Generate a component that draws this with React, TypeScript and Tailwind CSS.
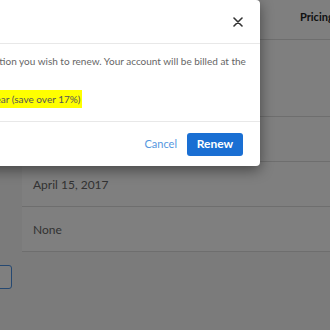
import React from "react";

export default function App() {
  return (
    <div className="relative w-[330px] h-[330px] overflow-hidden bg-[#f6f6f6] font-['Lato',sans-serif]">
      {/* underlying page */}
      <div className="flex flex-col">
        <div className="ml-[22px] w-[400px] bg-white text-[12px] text-[#666]">
          <div className="h-[40px] border-b border-[#dcdcdc] flex items-start pt-[9px]">
            <div className="w-[278px]" />
            <div className="font-bold text-[#222] text-[11px]">Pricing</div>
          </div>
          <div className="h-[77px] border-b border-[#dcdcdc]" />
          <div className="h-[45px] border-b border-[#dcdcdc]" />
          <div className="h-[45px] border-b border-[#dcdcdc] flex items-center pl-[11px] pt-[2px]">April 15, 2017</div>
          <div className="h-[45px] border-b border-[#dcdcdc] flex items-center pl-[11px] pt-[2px]">None</div>
        </div>
        <div className="mt-[13px] ml-[-60px] w-[72px] h-[24px] rounded-[3px] border border-[#4a90e2] bg-white" />
      </div>

      {/* overlay */}
      <div className="absolute inset-0 bg-black/50" />

      {/* modal */}
      <div className="absolute top-0 left-[-164px] w-[424px] h-[166px] bg-white rounded-[4px] shadow-[0_4px_14px_rgba(0,0,0,0.45)] flex flex-col">
        <div className="h-[44px] border-b border-[#e8e8e8] flex items-center justify-between pl-[20px] pr-[17px]">
          <span className="text-[14px] text-[#333]">Renew</span>
          <svg width="10" height="10" viewBox="0 0 10 10" className="text-[#333]">
            <path d="M1 1L9 9M9 1L1 9" stroke="currentColor" strokeWidth="1.6" strokeLinecap="round" />
          </svg>
        </div>
        <div className="h-[78px] border-b border-[#e8e8e8] pl-[20px] pt-[10px] text-[10px] text-[#666] leading-[14px]">
          <p className="whitespace-nowrap">Please select the subscription option you wish to renew. Your account will be billed at the</p>
          <div className="mt-[22px] ml-[82px] flex items-center">
            <span className="bg-[#ffff00] text-[#555] px-[2px] py-[2px]">$99.00 per year (save over 17%)</span>
          </div>
        </div>
        <div className="flex-1 flex items-center justify-end pr-[17px] gap-[10px]">
          <button className="text-[11px] text-[#5597e0]">Cancel</button>
          <button className="w-[56px] h-[23px] rounded-[3px] bg-[#1a6fd3] text-white text-[12px] font-bold">Renew</button>
        </div>
      </div>
    </div>
  );
}
